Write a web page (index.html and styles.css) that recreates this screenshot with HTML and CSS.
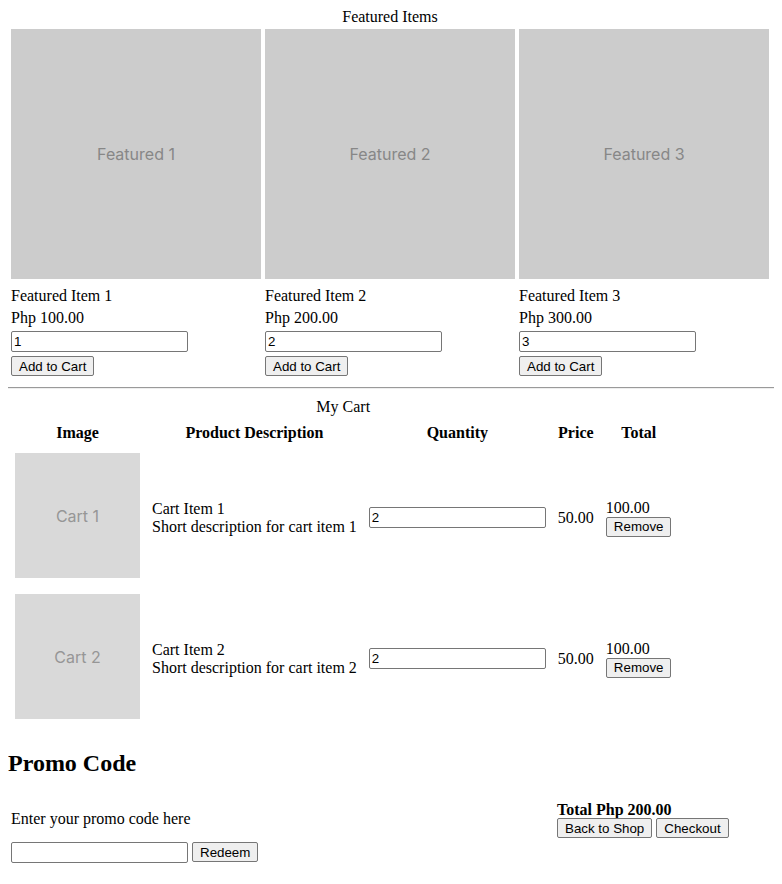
FILE: index.html
```html
<!DOCTYPE html>
<html lang="en">
<head>
  <meta charset="UTF-8">
  <meta name="viewport" content="width=device-width, initial-scale=1.0">
  <title>Shop</title>
  <link rel="stylesheet" href="styles.css">
</head>
<body>
  <div class="featured">
    <div class="featured-title">Featured Items</div>
    <div class="featured-grid">
      <div class="featured-item">
        <div class="thumb thumb-featured">Featured 1</div>
        <div class="item-line item-name">Featured Item 1</div>
        <div class="item-line">Php 100.00</div>
        <input type="text" class="field" value="1">
        <button type="button" class="btn">Add to Cart</button>
      </div>
      <div class="featured-item">
        <div class="thumb thumb-featured">Featured 2</div>
        <div class="item-line item-name">Featured Item 2</div>
        <div class="item-line">Php 200.00</div>
        <input type="text" class="field" value="2">
        <button type="button" class="btn">Add to Cart</button>
      </div>
      <div class="featured-item">
        <div class="thumb thumb-featured">Featured 3</div>
        <div class="item-line item-name">Featured Item 3</div>
        <div class="item-line">Php 300.00</div>
        <input type="text" class="field" value="3">
        <button type="button" class="btn">Add to Cart</button>
      </div>
    </div>
  </div>

  <div class="divider"></div>

  <table class="cart">
    <caption>My Cart</caption>
    <thead>
      <tr>
        <th>Image</th>
        <th>Product Description</th>
        <th>Quantity</th>
        <th>Price</th>
        <th>Total</th>
      </tr>
    </thead>
    <tbody>
      <tr>
        <td><div class="thumb thumb-cart">Cart 1</div></td>
        <td>Cart Item 1<br>Short description for cart item 1</td>
        <td><input type="text" class="field" value="2"></td>
        <td>50.00</td>
        <td>100.00<br><button type="button" class="btn">Remove</button></td>
      </tr>
      <tr>
        <td><div class="thumb thumb-cart">Cart 2</div></td>
        <td>Cart Item 2<br>Short description for cart item 2</td>
        <td><input type="text" class="field" value="2"></td>
        <td>50.00</td>
        <td>100.00<br><button type="button" class="btn">Remove</button></td>
      </tr>
    </tbody>
  </table>

  <h2 class="promo-title">Promo Code</h2>

  <div class="promo">
    <div class="promo-left">
      <p class="promo-hint">Enter your promo code here</p>
      <div class="promo-form">
        <input type="text" class="field">
        <button type="button" class="btn">Redeem</button>
      </div>
    </div>
    <div class="promo-right">
      <div class="grand-total">Total Php 200.00</div>
      <div class="actions">
        <button type="button" class="btn">Back to Shop</button>
        <button type="button" class="btn">Checkout</button>
      </div>
    </div>
  </div>
</body>
</html>
```

FILE: styles.css
```css
body {
  margin: 8px;
  font-family: "Liberation Serif", "Times New Roman", serif;
  font-size: 16px;
  color: #000;
  background: #fff;
}

.featured {
  width: 764px;
}

.featured-title {
  text-align: center;
}

.featured-grid {
  display: grid;
  grid-template-columns: repeat(3, 250px);
  column-gap: 4px;
  padding: 3px 3px 3px 3px;
}

.featured-item {
  display: flex;
  flex-direction: column;
  align-items: flex-start;
}

.thumb {
  display: flex;
  align-items: center;
  justify-content: center;
  font-family: Inter, "Noto Sans", sans-serif;
  font-size: 16px;
}

.thumb-featured {
  width: 250px;
  height: 250px;
  background-color: #cccccc;
  color: #878787;
}

.thumb-cart {
  width: 125px;
  height: 125px;
  margin-bottom: 4px;
  background-color: #d9d9d9;
  color: #969696;
}

.item-line {
  line-height: 22px;
}

.item-name {
  margin-top: 6px;
}

.field {
  box-sizing: border-box;
  width: 177px;
  height: 21px;
  padding: 1px 2px;
  border: 1px solid #767676;
  border-radius: 2px;
  font-family: "Liberation Sans", Arial, sans-serif;
  font-size: 13.333px;
  color: #000;
  background: #fff;
}

.featured-item .field {
  margin-top: 2px;
}

.btn {
  box-sizing: border-box;
  height: 20px;
  padding: 0 7px;
  border: 1px solid #767676;
  border-radius: 2px;
  background-color: #efefef;
  font-family: "Liberation Sans", Arial, sans-serif;
  font-size: 13.333px;
  color: #000;
  cursor: pointer;
}

.featured-item .btn {
  margin-top: 4px;
}

.divider {
  width: calc(100vw - 8px);
  height: 0;
  margin: 8px 0 9px;
  border-top: 1px solid #9a9a9a;
  border-bottom: 1px solid #eeeeee;
}

.cart {
  border-spacing: 2px;
}

.cart th,
.cart td {
  padding: 5px;
}

.cart th {
  padding-top: 6px;
  padding-bottom: 4px;
}

.promo-title {
  font-size: 24px;
  margin: 20px 0;
}

.promo {
  display: flex;
  align-items: flex-start;
  padding-left: 3px;
}

.promo-left {
  width: 546px;
}

.promo-hint {
  margin: 13px 0 14px;
}

.promo-form {
  display: flex;
  gap: 4px;
}

.promo-right {
  padding-top: 4px;
}

.grand-total {
  font-weight: bold;
  line-height: 17px;
}

.actions {
  display: flex;
  gap: 4px;
}
```
